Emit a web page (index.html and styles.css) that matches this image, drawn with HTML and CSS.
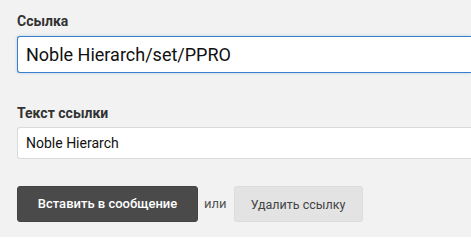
FILE: index.html
```html
<!DOCTYPE html>
<html>
<head>
  <meta charset="utf-8">
  <title>Ссылка</title>
  <link rel="stylesheet" href="styles.css">
</head>
<body>
  <form class="link-form">
    <label class="field-label" for="url">Ссылка</label>
    <input class="field field-url" id="url" type="text" value="Noble Hierarch/set/PPRO">

    <label class="field-label field-label-second" for="title">Текст ссылки</label>
    <input class="field field-title" id="title" type="text" value="Noble Hierarch">

    <div class="actions">
      <button type="button" class="btn btn-primary">Вставить в сообщение</button>
      <span class="or">или</span>
      <button type="button" class="btn btn-secondary">Удалить ссылку</button>
    </div>
  </form>
</body>
</html>
```
FILE: styles.css
```css
html, body {
  margin: 0;
  padding: 0;
  background: #fff;
}

body {
  font-family: Roboto, "Liberation Sans", sans-serif;
  color: #333;
}

.link-form {
  display: flex;
  flex-direction: column;
  align-items: flex-start;
  background: #f2f2f2;
  height: 237px;
  box-sizing: border-box;
  padding: 11px 0 0 17px;
  overflow: hidden;
}

.field-label {
  font-size: 14px;
  font-weight: bold;
  line-height: 20px;
  color: #333;
  margin-bottom: 5px;
}

.field-label-second {
  margin-top: 30px;
  margin-bottom: 4px;
}

/* the fields run on past the right edge of the panel */
.field {
  box-sizing: border-box;
  align-self: stretch;
  margin: 0;
  padding: 0 8px;
  background: #fff;
  border: 1px solid #dadada;
  border-right: 0;
  border-radius: 3px 0 0 3px;
  font-family: Roboto, "Liberation Sans", sans-serif;
  color: #111;
  outline: none;
}

.field-url {
  height: 37px;
  font-size: 18px;
  border-color: #3a7fcc;
  box-shadow: 0 0 3px rgba(58, 127, 204, 0.35);
}

.field-title {
  height: 32px;
  font-size: 14px;
}

.actions {
  display: flex;
  align-items: center;
  margin-top: 26px;
}

.btn {
  box-sizing: border-box;
  height: 36px;
  border-radius: 3px;
  font-family: Roboto, "Liberation Sans", sans-serif;
  font-size: 13px;
  cursor: pointer;
}

.btn-primary {
  width: 181px;
  background: #4a4a4a;
  border: 1px solid #444;
  color: #fff;
  font-weight: 500;
}

.btn-secondary {
  width: 129px;
  margin-top: 1px;
  background: #e3e3e3;
  border: 1px solid #dcdcdc;
  color: #444;
  font-size: 12.5px;
}

.or {
  margin: 0 7px 0 6px;
  font-size: 13px;
  color: #555;
}
```
